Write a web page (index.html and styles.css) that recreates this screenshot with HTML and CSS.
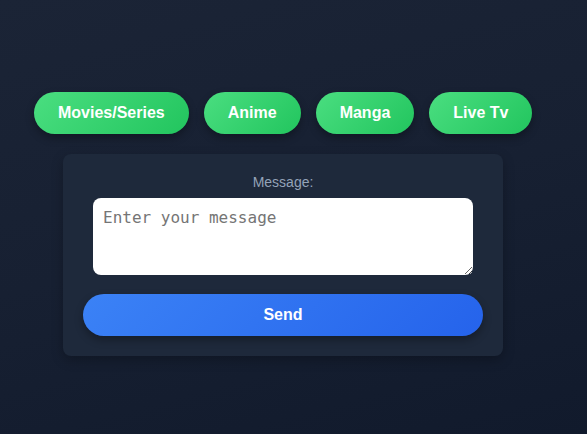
FILE: index.html
```html
<!DOCTYPE html>
<html>
<head>
<meta charset="utf-8">
<link rel="stylesheet" href="styles.css">
</head>
<body>
<div class="page">
  <nav class="nav">
    <button class="pill">Movies/Series</button>
    <button class="pill">Anime</button>
    <button class="pill">Manga</button>
    <button class="pill">Live Tv</button>
  </nav>
  <form class="card">
    <label class="label" for="msg">Message:</label>
    <textarea id="msg" class="input" placeholder="Enter your message"></textarea>
    <button type="button" class="send">Send</button>
  </form>
</div>
</body>
</html>
```

FILE: styles.css
```css
html, body {
  margin: 0;
  height: 100%;
}
body {
  background: linear-gradient(165deg, #1b2436 0%, #172032 50%, #111a2c 100%);
  font-family: "Liberation Sans", Arial, sans-serif;
}
.page {
  display: flex;
  flex-direction: column;
  padding: 92px 0 0 34px;
}
.nav {
  display: flex;
  gap: 15px;
}
.pill {
  height: 42px;
  padding: 0 24px;
  border: none;
  border-radius: 21px;
  background: linear-gradient(135deg, #4ade80, #22c55e);
  color: #fff;
  font-family: "Liberation Sans", Arial, sans-serif;
  font-weight: bold;
  font-size: 16px;
  box-shadow: 0 4px 8px rgba(0, 0, 0, 0.3);
}
.card {
  margin: 20px 0 0 29px;
  width: 440px;
  box-sizing: border-box;
  padding: 20px;
  background: #1e293b;
  border-radius: 8px;
  display: flex;
  flex-direction: column;
  align-items: center;
  box-shadow: 0 4px 12px rgba(0, 0, 0, 0.25);
}
.label {
  color: #94a3b8;
  font-size: 14px;
  line-height: 16px;
  margin-bottom: 8px;
}
.input {
  width: 380px;
  height: 77px;
  box-sizing: border-box;
  border: none;
  border-radius: 8px;
  padding: 10px;
  background: #fff;
  font-family: "DejaVu Sans Mono", monospace;
  font-size: 16px;
  color: #333;
  outline: none;
}
.input::placeholder {
  color: #757575;
}
.send {
  margin-top: 19px;
  width: 400px;
  height: 42px;
  border: none;
  border-radius: 21px;
  background: linear-gradient(135deg, #3b82f6, #2563eb);
  color: #fff;
  font-family: "Liberation Sans", Arial, sans-serif;
  font-weight: bold;
  font-size: 16px;
  box-shadow: 0 4px 8px rgba(0, 0, 0, 0.3);
}
```
